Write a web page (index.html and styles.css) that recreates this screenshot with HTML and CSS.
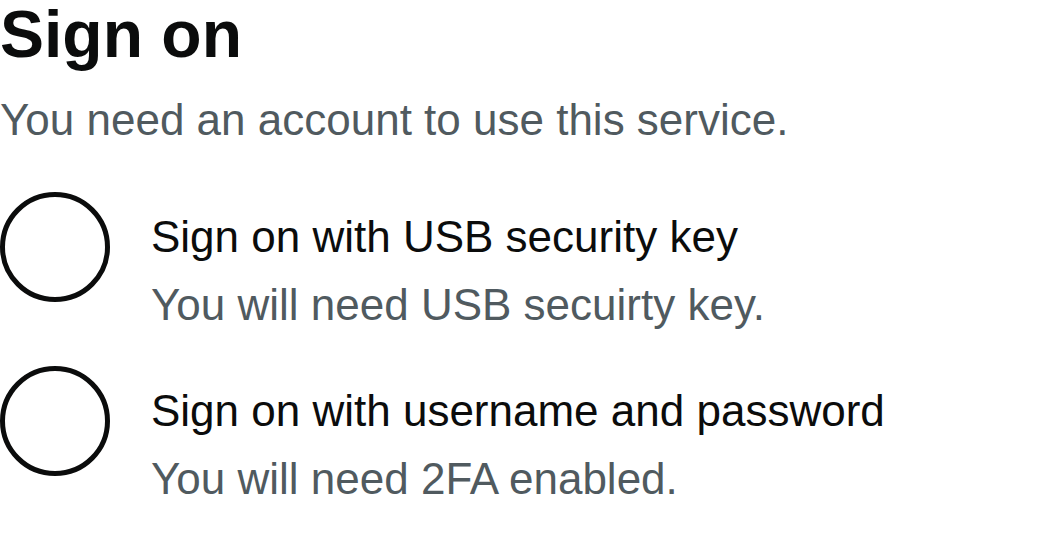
FILE: index.html
```html
<!DOCTYPE html>
<html lang="en">
<head>
<meta charset="utf-8">
<title>Sign on</title>
<link rel="stylesheet" href="styles.css">
</head>
<body>
<main class="page">
  <h1 class="title">Sign on</h1>
  <p class="lead">You need an account to use this service.</p>
  <div class="options">
    <label class="option">
      <span class="radio"></span>
      <span class="option-text">
        <span class="option-label">Sign on with USB security key</span>
        <span class="option-hint">You will need USB secuirty key.</span>
      </span>
    </label>
    <label class="option">
      <span class="radio"></span>
      <span class="option-text">
        <span class="option-label">Sign on with username and password</span>
        <span class="option-hint">You will need 2FA enabled.</span>
      </span>
    </label>
  </div>
</main>
</body>
</html>
```

FILE: styles.css
```css
html, body {
  margin: 0;
  padding: 0;
  background: #ffffff;
}

body {
  font-family: "Liberation Sans", Arial, sans-serif;
  color: #0b0c0c;
}

.page {
  display: flex;
  flex-direction: column;
}

.title {
  margin: 0;
  padding-top: 4px;
  font-size: 66px;
  line-height: 60px;
  font-weight: 700;
}

.lead {
  margin: 23px 0 0;
  font-size: 44px;
  line-height: 66px;
  color: #505a5f;
}

.options {
  margin-top: 39px;
  display: flex;
  flex-direction: column;
  gap: 28px;
}

.option {
  display: flex;
  align-items: flex-start;
  gap: 41px;
}

.radio {
  flex: none;
  width: 110px;
  height: 110px;
  box-sizing: border-box;
  border: 5px solid #0b0c0c;
  border-radius: 50%;
}

.option-text {
  display: flex;
  flex-direction: column;
  padding-top: 12px;
  font-size: 44px;
  line-height: 66px;
}

.option-label {
  color: #0b0c0c;
}

.option-hint {
  color: #505a5f;
  margin-top: 2px;
}
```
